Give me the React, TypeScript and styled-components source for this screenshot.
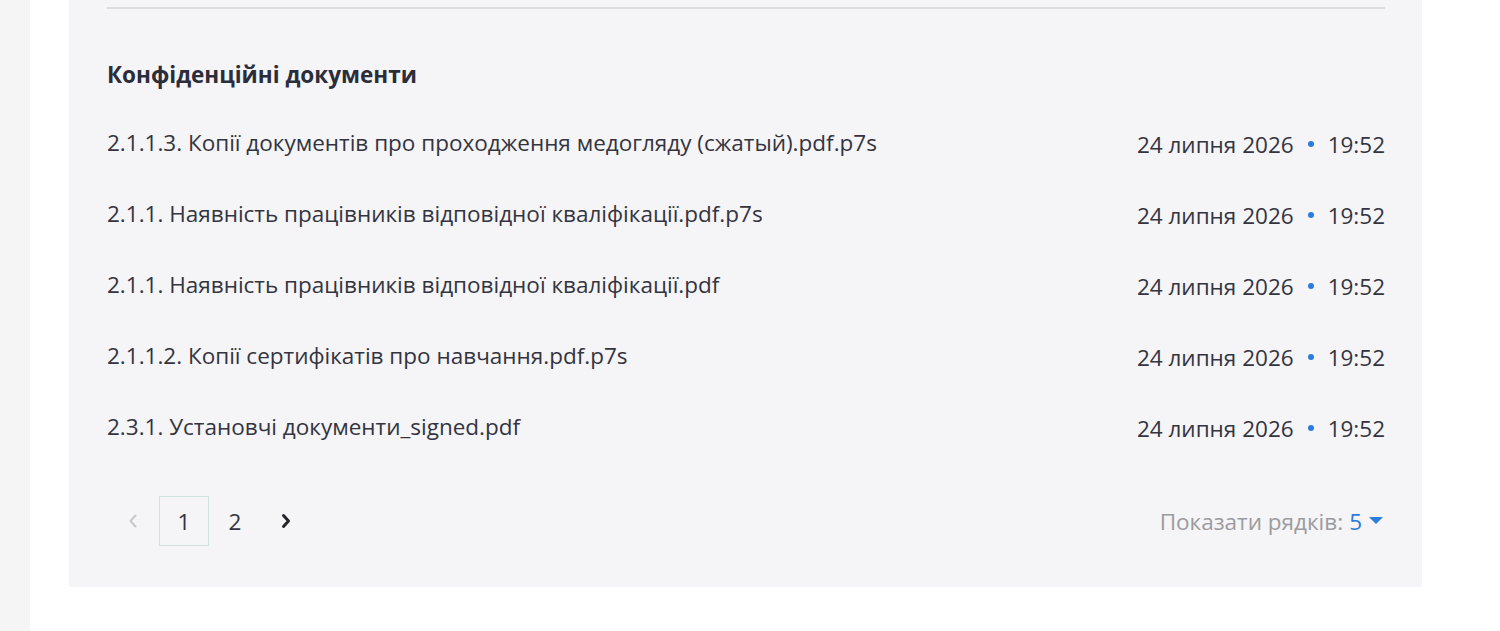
import React from 'react';
import styled, { createGlobalStyle } from 'styled-components';

const GlobalStyle = createGlobalStyle`
  html, body {
    margin: 0;
    padding: 0;
    background: #f5f5f5;
    font-family: "Open Sans", "Noto Sans", sans-serif;
  }
`;

const Page = styled.div`
  padding-left: 30px;
`;

const Card = styled.div`
  background: #ffffff;
  padding: 0 78px 44px 39px;
`;

const Panel = styled.section`
  background: #f5f4f6;
  padding: 7px 37px 41px 38px;
`;

const Divider = styled.hr`
  margin: 0;
  border: 0;
  height: 2px;
  background: #dcdcdc;
`;

const Heading = styled.h3`
  margin: 52px 0 0;
  font-size: 22.5px;
  line-height: 28px;
  font-weight: 700;
  color: #2b2d3a;
`;

const List = styled.ul`
  list-style: none;
  margin: 19px 0 0;
  padding: 0;
`;

const Row = styled.li`
  display: flex;
  justify-content: space-between;
  align-items: center;
  height: 71px;
`;

const FileName = styled.span`
  font-size: 22.5px;
  color: #33343f;
  margin-top: -3px;
`;

const Stamp = styled.span`
  display: flex;
  align-items: center;
  font-size: 22.5px;
  color: #33343f;
  margin-top: 1px;
`;

const Dot = styled.span`
  width: 6px;
  height: 6px;
  border-radius: 50%;
  background: #2d7bdc;
  margin: 0 14px 0 14px;
`;

const Footer = styled.div`
  display: flex;
  justify-content: space-between;
  align-items: center;
  margin-top: 33px;
`;

const Pager = styled.nav`
  display: flex;
  gap: 1px;
  margin-left: 1px;
`;

const PageItem = styled.span<{ $active?: boolean; $muted?: boolean }>`
  box-sizing: border-box;
  width: 50px;
  height: 50px;
  display: flex;
  align-items: center;
  justify-content: center;
  font-size: 22.5px;
  color: ${p => (p.$muted ? '#c8c8cc' : '#33343f')};
  border: 1px solid ${p => (p.$active ? '#cfe2de' : 'transparent')};
`;

const RowsPicker = styled.div`
  display: flex;
  align-items: center;
  font-size: 22.5px;
  color: #9b9b9f;
  margin-right: 2px;
`;

const RowsValue = styled.span`
  color: #2d7bdc;
  margin-left: 6px;
  margin-right: 7px;
`;

const Chevron = ({ dir, color, width }: { dir: 'left' | 'right'; color: string; width: number }) => (
  <svg width="12" height="16" viewBox="0 0 12 16" fill="none">
    <polyline
      points={dir === 'left' ? '8.5,2.5 3.5,8 8.5,13.5' : '3.5,2.5 8.5,8 3.5,13.5'}
      stroke={color}
      strokeWidth={width}
      strokeLinecap="round"
      strokeLinejoin="round"
    />
  </svg>
);

const Caret = () => (
  <svg width="14" height="8" viewBox="0 0 14 8">
    <polygon points="0,0 14,0 7,7" fill="#2d7bdc" />
  </svg>
);

const files = [
  '2.1.1.3. Копії документів про проходження медогляду (сжатый).pdf.p7s',
  '2.1.1. Наявність працівників відповідної кваліфікації.pdf.p7s',
  '2.1.1. Наявність працівників відповідної кваліфікації.pdf',
  '2.1.1.2. Копії сертифікатів про навчання.pdf.p7s',
  '2.3.1. Установчі документи_signed.pdf',
];

export default function App() {
  return (
    <>
      <GlobalStyle />
      <Page>
        <Card>
          <Panel>
            <Divider />
            <Heading>Конфіденційні документи</Heading>
            <List>
              {files.map(name => (
                <Row key={name}>
                  <FileName>{name}</FileName>
                  <Stamp>
                    24 липня 2026
                    <Dot />
                    19:52
                  </Stamp>
                </Row>
              ))}
            </List>
            <Footer>
              <Pager>
                <PageItem $muted>
                  <Chevron dir="left" color="#c8c8cc" width={2} />
                </PageItem>
                <PageItem $active>1</PageItem>
                <PageItem>2</PageItem>
                <PageItem>
                  <Chevron dir="right" color="#23242c" width={3} />
                </PageItem>
              </Pager>
              <RowsPicker>
                Показати рядків:
                <RowsValue>5</RowsValue>
                <Caret />
              </RowsPicker>
            </Footer>
          </Panel>
        </Card>
      </Page>
    </>
  );
}
